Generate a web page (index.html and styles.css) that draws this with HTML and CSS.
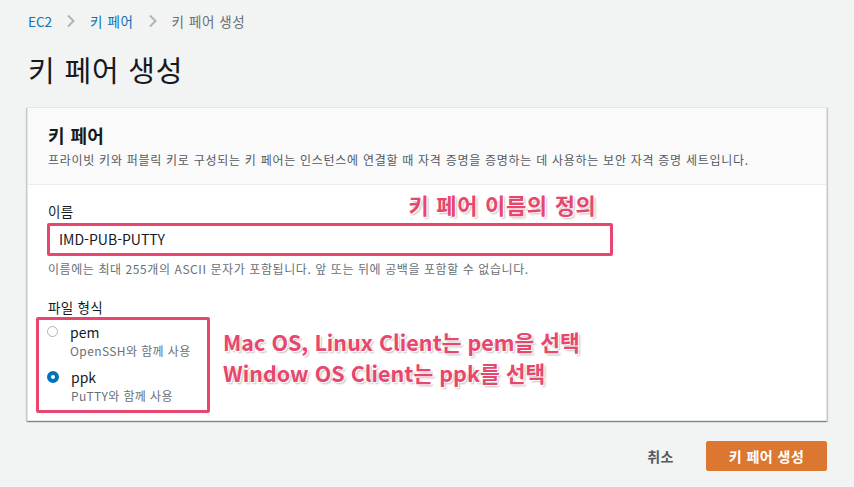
FILE: index.html
```html
<!DOCTYPE html>
<html lang="ko">
<head>
<meta charset="utf-8">
<link rel="stylesheet" href="styles.css">
</head>
<body>
<div class="page">
  <nav class="crumbs">
    <a class="crumb-link">EC2</a>
    <svg class="chev" width="10" height="14" viewBox="0 0 10 14"><path d="M2 1.5 L7.5 7 L2 12.5" fill="none" stroke="#aab7b8" stroke-width="2"/></svg>
    <a class="crumb-link ko">키 페어</a>
    <svg class="chev" width="10" height="14" viewBox="0 0 10 14"><path d="M2 1.5 L7.5 7 L2 12.5" fill="none" stroke="#aab7b8" stroke-width="2"/></svg>
    <span class="crumb-cur ko">키 페어 생성</span>
  </nav>
  <h1 class="title">키 페어 생성</h1>

  <section class="card">
    <header class="card-head">
      <h2 class="card-title">키 페어</h2>
      <p class="card-desc">프라이빗 키와 퍼블릭 키로 구성되는 키 페어는 인스턴스에 연결할 때 자격 증명을 증명하는 데 사용하는 보안 자격 증명 세트입니다.</p>
    </header>
    <div class="card-body">
      <div class="field">
        <div class="label-row">
          <label class="label">이름</label>
          <span class="note note-name">키 페어 이름의 정의</span>
        </div>
        <div class="input hl">IMD-PUB-PUTTY</div>
        <p class="hint">이름에는 최대 255개의 ASCII 문자가 포함됩니다. 앞 또는 뒤에 공백을 포함할 수 없습니다.</p>
      </div>
      <div class="field field-file">
        <label class="label">파일 형식</label>
        <div class="file-row">
          <div class="radios hl">
            <div class="radio">
              <span class="dot"></span>
              <div>
                <div class="r-title">pem</div>
                <div class="r-sub">OpenSSH와 함께 사용</div>
              </div>
            </div>
            <div class="radio">
              <span class="dot on"></span>
              <div>
                <div class="r-title">ppk</div>
                <div class="r-sub">PuTTY와 함께 사용</div>
              </div>
            </div>
          </div>
          <div class="note note-file">
            <div>Mac OS, Linux Client는 pem을 선택</div>
            <div>Window OS Client는 ppk를 선택</div>
          </div>
        </div>
      </div>
    </div>
  </section>

  <div class="actions">
    <button class="btn-link">취소</button>
    <button class="btn-primary">키 페어 생성</button>
  </div>
</div>
</body>
</html>
```

FILE: styles.css
```css
html, body {
  margin: 0;
  padding: 0;
  background: #f2f3f3;
  font-family: "Noto Sans CJK KR", "Noto Sans", sans-serif;
  color: #16191f;
}
.page {
  padding: 9px 27px 0 27px;
  width: 800px;
}
.crumbs {
  display: flex;
  align-items: center;
  gap: 14px;
  height: 24px;
  font-size: 13.5px;
  padding-left: 1px;
}
.crumbs .ko { letter-spacing: 0.6px; }
.crumb-link { color: #0f6fb8; }
.crumb-cur { color: #687078; }
.chev { display: block; }
.title {
  margin: 16px 0 0 1px;
  font-size: 29px;
  font-weight: 400;
  line-height: 40px;
  height: 40px;
  letter-spacing: 0.8px;
}
.card {
  margin-top: 18px;
  background: #fff;
  border: 1px solid #e4e6e6;
  box-shadow: 0 1px 1px rgba(0,28,36,0.3), 1px 1px 1px rgba(0,28,36,0.15), -1px 1px 1px rgba(0,28,36,0.15);
}
.card-head {
  background: #fafafa;
  border-bottom: 1px solid #eaeded;
  padding: 14px 20px 15px 20px;
}
.card-title {
  margin: 0;
  font-size: 18px;
  font-weight: 700;
  line-height: 26px;
  letter-spacing: 0.4px;
}
.card-desc {
  margin: 3px 0 0 0;
  font-size: 12px;
  color: #545b64;
  line-height: 18px;
  letter-spacing: 0.72px;
  white-space: nowrap;
}
.card-body {
  padding: 10px 20px 7px 20px;
}
.label-row {
  display: flex;
  align-items: flex-end;
  height: 28px;
}
.label {
  font-size: 13.5px;
  line-height: 20px;
  display: block;
  letter-spacing: 0.3px;
}
.label-row .label {
  margin-bottom: 2px;
}
.note {
  color: #e8466f;
  font-weight: 700;
  text-shadow: 1px 1px 0 #fff, 2px 2px 2px rgba(0,0,0,0.25);
}
.note-name {
  align-self: flex-start;
  font-size: 22px;
  line-height: 26px;
  margin-left: 335px;
  margin-top: -4px;
  letter-spacing: 0.7px;
}
.input {
  margin-left: -1px;
  width: 551px;
  height: 27px;
  padding: 0 0 0 9px;
  font-size: 14px;
  line-height: 27px;
  background: #fff;
}
.hl {
  border: 3px solid #e8466f;
  border-radius: 2px;
}
.hint {
  margin: 4px 0 0 0;
  font-size: 12px;
  color: #687078;
  line-height: 18px;
  letter-spacing: 0.58px;
  white-space: nowrap;
}
.field-file {
  margin-top: 19px;
}
.file-row {
  display: flex;
  align-items: flex-start;
}
.radios {
  margin-left: -12px;
  width: 160px;
  padding: 2px 0 6px 8px;
  display: flex;
  flex-direction: column;
  gap: 8px;
}
.radio {
  display: flex;
  align-items: flex-start;
  gap: 12px;
}
.dot {
  width: 9px;
  height: 9px;
  border-radius: 50%;
  border: 1.5px solid #aab7b8;
  margin-top: 4px;
  flex: none;
  box-sizing: content-box;
  background: #fff;
}
.dot.on {
  width: 4px;
  height: 4px;
  border: 4px solid #0073bb;
}
.r-title {
  font-size: 14px;
  line-height: 20px;
}
.r-sub {
  font-size: 12px;
  line-height: 17px;
  color: #687078;
  letter-spacing: 0.4px;
}
.note-file {
  margin-left: 13px;
  margin-top: 9px;
  font-size: 21.5px;
  line-height: 31px;
}
.actions {
  display: flex;
  justify-content: flex-end;
  align-items: center;
  gap: 32px;
  margin-top: 20px;
}
.btn-link {
  background: none;
  border: none;
  font-family: inherit;
  font-size: 14px;
  font-weight: 700;
  color: #545b64;
  padding: 0;
  letter-spacing: 0.5px;
}
.btn-primary {
  background: #dc7731;
  color: #fff;
  border: 1px solid #dc7731;
  border-radius: 2px;
  font-family: inherit;
  font-size: 14px;
  font-weight: 700;
  width: 121px;
  height: 30px;
  padding: 0;
  letter-spacing: 0.5px;
}
```
